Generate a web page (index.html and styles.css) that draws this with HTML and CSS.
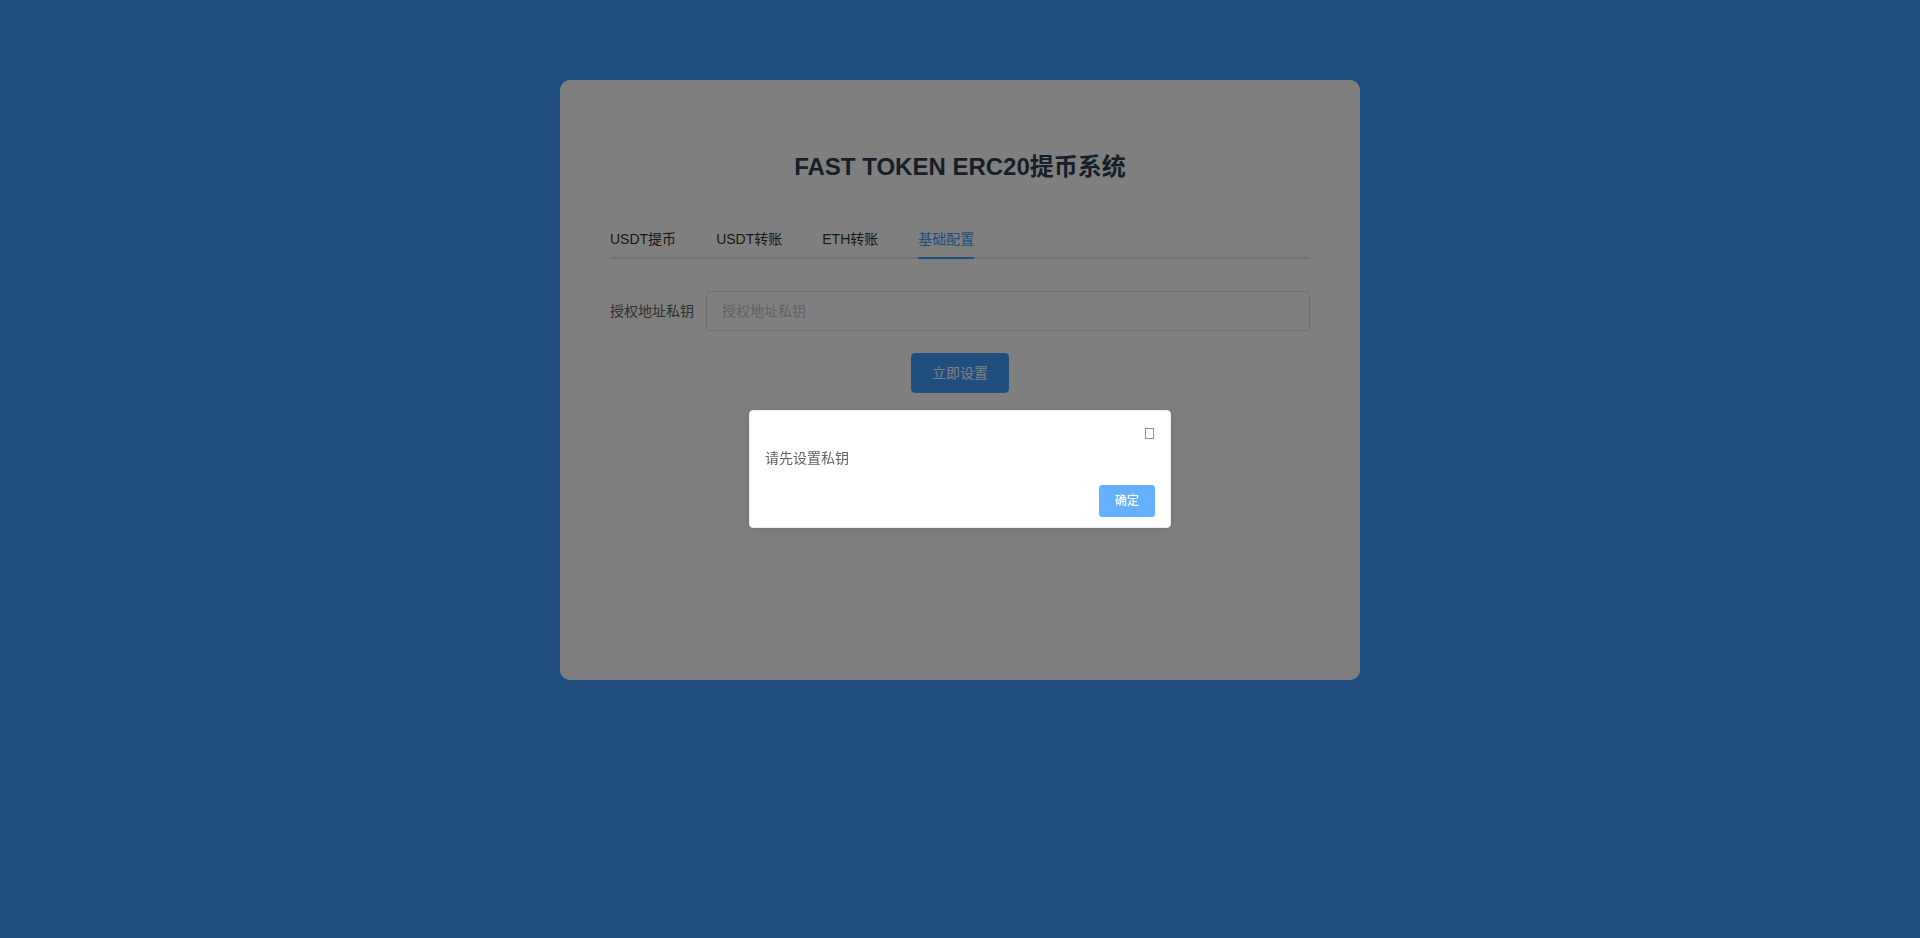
FILE: index.html
```html
<!DOCTYPE html>
<html lang="zh-CN">
<head>
<meta charset="utf-8">
<title>FAST TOKEN ERC20提币系统</title>
<link rel="stylesheet" href="styles.css">
</head>
<body>
<div class="app">
  <div class="card">
    <h2 class="title">FAST TOKEN ERC20提币系统</h2>
    <div class="tabs">
      <div class="tab"><span class="tab-label">USDT提币</span></div>
      <div class="tab"><span class="tab-label">USDT转账</span></div>
      <div class="tab"><span class="tab-label">ETH转账</span></div>
      <div class="tab active"><span class="tab-label">基础配置</span></div>
    </div>
    <form class="form">
      <div class="form-item">
        <label class="form-label">授权地址私钥</label>
        <input class="form-input" type="text" placeholder="授权地址私钥">
      </div>
      <div class="form-actions">
        <button type="button" class="btn-primary">立即设置</button>
      </div>
    </form>
  </div>
</div>

<div class="modal-mask"></div>
<div class="msgbox-wrapper">
  <div class="msgbox">
    <div class="msgbox-header">
      <span class="msgbox-close"></span>
    </div>
    <div class="msgbox-content">请先设置私钥</div>
    <div class="msgbox-btns">
      <button type="button" class="btn-small">确定</button>
    </div>
  </div>
</div>
</body>
</html>
```

FILE: styles.css
```css
html, body {
  margin: 0;
  padding: 0;
  height: 100%;
}

body {
  background: #409eff;
  font-family: "Liberation Sans", Arial, "Noto Sans CJK SC", sans-serif;
  overflow: hidden;
}

.app {
  padding-top: 80px;
}

.card {
  box-sizing: border-box;
  width: 800px;
  height: 600px;
  margin: 0 auto;
  padding: 50px 50px;
  background: #ffffff;
  border-radius: 10px;
}

.title {
  margin: 23px 0 39px;
  font-size: 24px;
  line-height: 27px;
  font-weight: bold;
  text-align: center;
  color: #2c3e50;
}

.tabs {
  display: flex;
  height: 40px;
  box-shadow: inset 0 -2px 0 #e4e7ed;
  margin-bottom: 32px;
}

.tab {
  padding: 0 20px;
  height: 40px;
  font-size: 14px;
  line-height: 40px;
  color: #303133;
}

.tab:first-child {
  padding-left: 0;
}

.tab:last-child {
  padding-right: 0;
}

.tab-label {
  display: inline-block;
  height: 40px;
}

.tab.active {
  color: #409eff;
}

.tab.active .tab-label {
  box-shadow: inset 0 -2px 0 #409eff;
}

.form {
  margin: 0;
}

.form-item {
  display: flex;
  align-items: center;
  margin-bottom: 22px;
}

.form-label {
  width: 96px;
  flex: none;
  box-sizing: border-box;
  padding-right: 12px;
  font-size: 14px;
  line-height: 40px;
  color: #606266;
}

.form-input {
  flex: 1;
  box-sizing: border-box;
  height: 40px;
  padding: 0 15px;
  border: 1px solid #dcdfe6;
  border-radius: 4px;
  font-family: "Liberation Sans", Arial, "Noto Sans CJK SC", sans-serif;
  font-size: 14px;
  color: #606266;
  outline: none;
  background: #fff;
}

.form-input::placeholder {
  color: #c0c4cc;
}

.form-actions {
  display: flex;
  justify-content: center;
}

.btn-primary {
  box-sizing: border-box;
  height: 40px;
  padding: 12px 20px;
  border: 1px solid #409eff;
  border-radius: 4px;
  background: #409eff;
  color: #ffffff;
  font-family: "Liberation Sans", Arial, "Noto Sans CJK SC", sans-serif;
  font-size: 14px;
  line-height: 14px;
  cursor: pointer;
}

.modal-mask {
  position: fixed;
  inset: 0;
  background: rgba(0, 0, 0, 0.5);
}

.msgbox-wrapper {
  position: fixed;
  inset: 0;
  display: flex;
  align-items: center;
  justify-content: center;
}

.msgbox {
  position: relative;
  width: 420px;
  padding-bottom: 10px;
  background: #ffffff;
  border: 1px solid #ebeef5;
  border-radius: 4px;
  box-shadow: 0 2px 12px 0 rgba(0, 0, 0, 0.1);
  font-size: 14px;
}

.msgbox-header {
  height: 25px;
}

.msgbox-close {
  position: absolute;
  top: 17px;
  right: 16px;
  box-sizing: border-box;
  width: 9px;
  height: 11px;
  border: 1px solid #909399;
  border-left-width: 1.5px;
  border-right-width: 1.5px;
}

.msgbox-content {
  padding: 10px 15px;
  font-size: 14px;
  line-height: 24px;
  color: #606266;
}

.msgbox-btns {
  padding: 5px 15px 0;
  display: flex;
  justify-content: flex-end;
}

.btn-small {
  box-sizing: border-box;
  height: 32px;
  padding: 9px 15px;
  border: 1px solid #66b1ff;
  border-radius: 3px;
  background: #66b1ff;
  color: #ffffff;
  font-family: "Liberation Sans", Arial, "Noto Sans CJK SC", sans-serif;
  font-size: 12px;
  line-height: 12px;
  font-weight: 500;
}
```
